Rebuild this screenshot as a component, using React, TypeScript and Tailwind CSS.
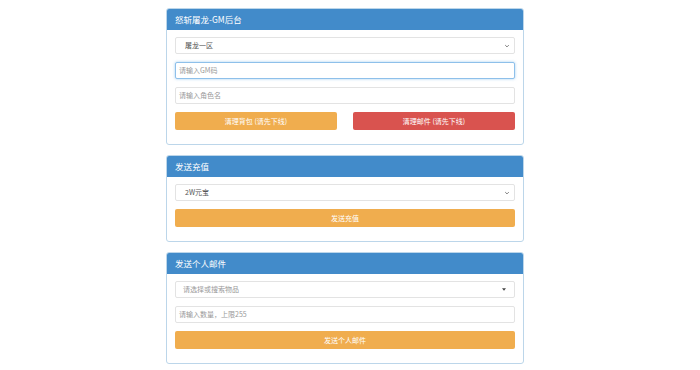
import React from "react";

const font = { fontFamily: '"Noto Sans CJK SC", "Liberation Sans", sans-serif' };

function Panel({ title, children }: { title: string; children: React.ReactNode }) {
  return (
    <div className="rounded-[3px] border border-[#bcd6ea] bg-white">
      <div className="flex h-[21px] items-center rounded-t-[2px] bg-[#428bca] px-[8px] text-[8.5px] text-white">
        {title}
      </div>
      <div className="flex flex-col gap-[8px] px-[8px] pb-[14px] pt-[7px]">{children}</div>
    </div>
  );
}

function Select({ value, caret = "chevron" }: { value: string; caret?: "chevron" | "triangle" }) {
  return (
    <div className="flex h-[17px] items-center justify-between rounded-[2px] border border-[#e3e3e3] bg-white pl-[9px] pr-[4px] text-[7px]">
      <span className={caret === "triangle" ? "-ml-[2px] text-[#999]" : "text-[#555]"}>{value}</span>
      {caret === "chevron" ? (
        <svg width="6" height="6" viewBox="0 0 10 10" className="text-[#666]">
          <path d="M2 3.5 L5 6.5 L8 3.5" fill="none" stroke="currentColor" strokeWidth="1.4" />
        </svg>
      ) : (
        <svg width="4" height="3" viewBox="0 0 8 5" className="mr-[4px] text-[#444]">
          <path d="M0 0 L8 0 L4 5 Z" fill="currentColor" />
        </svg>
      )}
    </div>
  );
}

function Input({ placeholder, focus = false }: { placeholder: string; focus?: boolean }) {
  return (
    <div
      className={
        "flex h-[17px] items-center rounded-[2px] border bg-white px-[3px] text-[7px] text-[#999] " +
        (focus ? "border-[#8ec0ea] shadow-[0_0_3px_rgba(102,175,233,0.6)]" : "border-[#e3e3e3]")
      }
    >
      {placeholder}
    </div>
  );
}

function Button({ label, color, grow = false }: { label: string; color: string; grow?: boolean }) {
  return (
    <div
      className={
        "flex h-[18px] items-center justify-center rounded-[2px] text-[7px] text-white " +
        (grow ? "flex-1 " : "") +
        color
      }
    >
      {label}
    </div>
  );
}

export default function App() {
  return (
    <main className="min-h-screen bg-white pt-[8px]" style={font}>
      <div className="ml-[166px] flex w-[358px] flex-col gap-[10px]">
        <Panel title="怒斩屠龙-GM后台">
          <Select value="屠龙一区" />
          <Input placeholder="请输入GM码" focus />
          <Input placeholder="请输入角色名" />
          <div className="flex gap-[16px]">
            <Button label="清理背包 (请先下线)" color="bg-[#f0ad4e]" grow />
            <Button label="清理邮件 (请先下线)" color="bg-[#d9534f]" grow />
          </div>
        </Panel>
        <Panel title="发送充值">
          <Select value="2W元宝" />
          <Button label="发送充值" color="bg-[#f0ad4e]" />
        </Panel>
        <Panel title="发送个人邮件">
          <Select value="请选择或搜索物品" caret="triangle" />
          <Input placeholder="请输入数量，上限255" />
          <Button label="发送个人邮件" color="bg-[#f0ad4e]" />
        </Panel>
      </div>
    </main>
  );
}
